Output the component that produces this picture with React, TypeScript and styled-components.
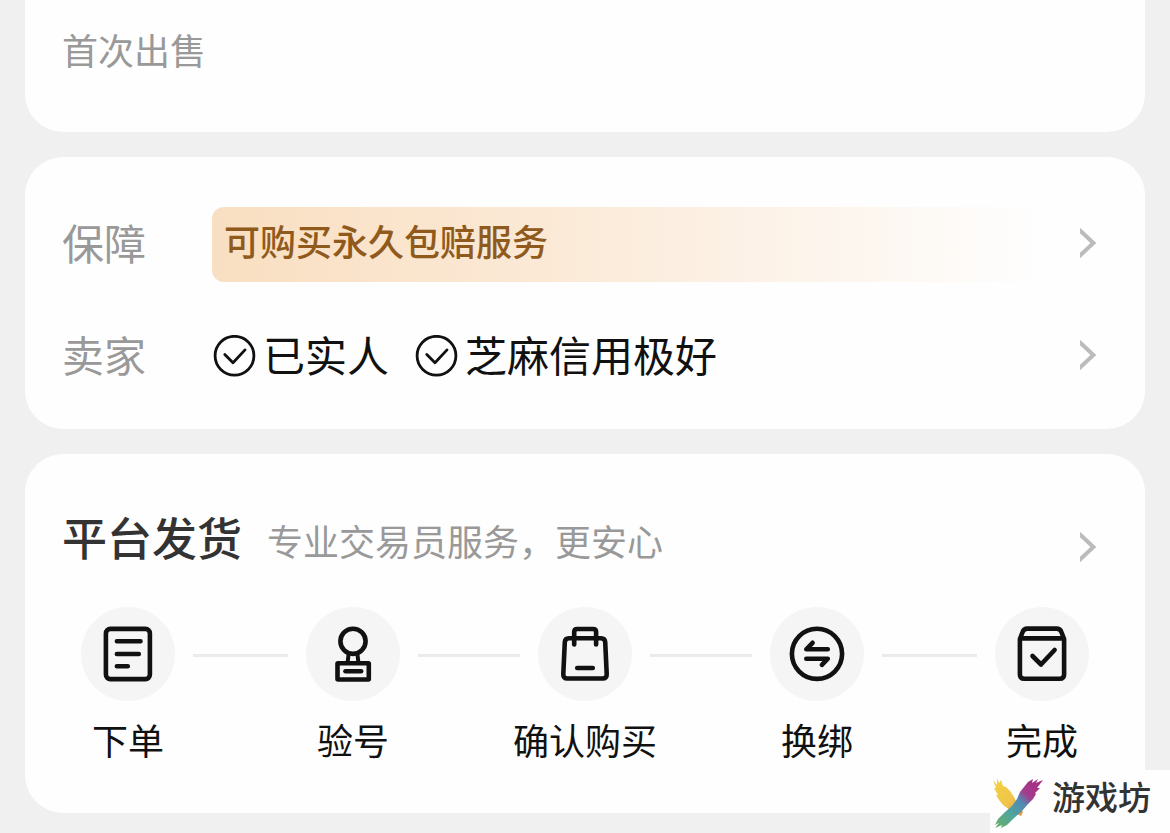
import React from 'react';
import styled, { createGlobalStyle } from 'styled-components';

const GlobalStyle = createGlobalStyle`
  *, *::before, *::after { box-sizing: border-box; }
  body {
    margin: 0;
    background: #f0f0f0;
    font-family: "Noto Sans CJK SC", sans-serif;
    color: #111;
  }
`;

const Page = styled.main`
  position: relative;
  display: flex;
  flex-direction: column;
  gap: 25px;
  padding: 0 25px 20px;
`;

const Card = styled.section<{ $pad: string; $open?: boolean }>`
  background: #fefefe;
  border-radius: ${(p) => (p.$open ? '0 0 38px 38px' : '38px')};
  padding: ${(p) => p.$pad};
`;

const Note = styled.p`
  margin: 0;
  font-size: 36px;
  line-height: 52px;
  color: #999;
`;

const Rows = styled.div`
  display: flex;
  flex-direction: column;
  gap: 37px;
`;

const Row = styled.button`
  display: flex;
  align-items: center;
  width: 100%;
  min-height: 75px;
  padding: 0;
  border: 0;
  background: none;
  color: inherit;
  font: inherit;
  text-align: left;
  cursor: pointer;
`;

const RowText = styled.span`
  padding-bottom: 6px;
  font-size: 42px;
  line-height: 60px;
  white-space: nowrap;
`;

const RowLabel = styled(RowText)`
  flex: 0 0 150px;
  color: #999;
`;

const Banner = styled.span`
  flex: 1;
  margin-right: 38px;
  padding: 7px 12px 16px;
  border-radius: 12px;
  background: linear-gradient(90deg, #f9dfc1 0%, #fbe9d6 40%, #fefefe 100%);
  font-size: 36px;
  line-height: 52px;
  font-weight: 500;
  color: #8f5a1c;
`;

const Badges = styled.span`
  flex: 1;
  display: flex;
  gap: 26px;
  padding-left: 1px;
`;

const Badge = styled.span`
  display: flex;
  align-items: center;
  gap: 7px;
`;

const Heading = styled(Row)`
  min-height: 72px;
  margin-bottom: 31px;
`;

const HeadingText = styled.span`
  flex: 1;
  display: flex;
  align-items: baseline;
  gap: 25px;
  padding-bottom: 6px;
`;

const Title = styled.span`
  font-size: 45px;
  line-height: 66px;
  font-weight: 500;
  color: #333;
`;

const Subtitle = styled.span`
  font-size: 36px;
  line-height: 52px;
  color: #999;
`;

const ChevronBox = styled.span<{ $low?: boolean }>`
  display: flex;
  padding: ${(p) => (p.$low ? '14px 0 0' : '0 0 3px')};
`;

const Steps = styled.ol`
  display: flex;
  list-style: none;
  margin: 0;
  padding: 0 8px 0 19px;
`;

const Step = styled.li`
  flex: 0 0 94px;
  min-width: 0;
  display: flex;
  flex-direction: column;
  align-items: center;
  gap: 12px;
`;

const StepIcon = styled.span`
  display: flex;
  width: 94px;
  height: 94px;
  border-radius: 50%;
  background: #f5f5f5;
`;

const StepLabel = styled.span`
  font-size: 36px;
  line-height: 52px;
  white-space: nowrap;
`;

const Connector = styled.li<{ $grow: number }>`
  flex: ${(p) => p.$grow} 1 0;
  height: 3px;
  margin: 47px 18px 0;
  background: #ebebeb;
`;

const Watermark = styled.div`
  position: absolute;
  right: 0;
  bottom: 0;
  display: flex;
  align-items: center;
  gap: 6px;
  width: 180px;
  height: 63px;
  background: #fefefe;
`;

const WatermarkText = styled.span`
  padding-bottom: 12px;
  font-size: 33px;
  line-height: 48px;
  font-weight: 500;
  color: #333;
  white-space: nowrap;
`;

const Chevron = ({ low }: { low?: boolean }) => (
  <ChevronBox $low={low}>
    <svg width="17" height="30" viewBox="0 0 17 30" fill="none" stroke="#bbb" strokeWidth="4" aria-hidden="true">
      <path d="M-1 1.5 L13.4 15 L-1 28.5" />
    </svg>
  </ChevronBox>
);

const Check = () => (
  <svg width="43" height="43" viewBox="0 0 43 43" fill="none" stroke="#111" strokeWidth="2.8" aria-hidden="true">
    <circle cx="21.5" cy="20.7" r="19.4" />
    <path d="M11.8 19.4 L20 27.8 L32 14.9" strokeLinecap="round" strokeLinejoin="round" />
  </svg>
);

const Glyph = ({ children }: { children: React.ReactNode }) => (
  <svg
    width="94"
    height="94"
    viewBox="0 0 94 94"
    fill="none"
    stroke="#111"
    strokeWidth="4.6"
    strokeLinecap="round"
    strokeLinejoin="round"
    aria-hidden="true"
  >
    {children}
  </svg>
);

const steps = [
  {
    label: '下单',
    icon: (
      <>
        <rect x="24.9" y="21.9" width="44" height="50.2" rx="4.5" />
        <path d="M35.9 34.3H59.5M35.9 47H57.8M35.9 59.3H46.8" />
      </>
    ),
  },
  {
    label: '验号',
    icon: (
      <>
        <circle cx="47" cy="34.3" r="12.6" />
        <path d="M42.6 47 L41.6 55.5 M51.4 47 L52.4 55.5" strokeWidth="4" />
        <rect x="31.5" y="56.2" width="31.3" height="16.3" rx="0.5" />
        <path d="M39.5 64.2H55.1" />
      </>
    ),
  },
  {
    label: '确认购买',
    icon: (
      <>
        <path d="M31 31.2H63Q67 31.2 67.2 35.2L68.7 67Q68.9 71.5 64.6 71.5H29.4Q25.1 71.5 25.3 67L26.8 35.2Q27 31.2 31 31.2Z" />
        <path d="M36.2 37.5V25Q36.2 22 39.2 22H55.1Q58.1 22 58.1 25V37.5" />
        <path d="M39.2 61H54.8" />
      </>
    ),
  },
  {
    label: '换绑',
    icon: (
      <>
        <circle cx="47" cy="46.8" r="25.1" />
        <path d="M57.8 42.3H36.3L42.6 35.8M36.3 51.7H57.8L51.9 57.8" />
      </>
    ),
  },
  {
    label: '完成',
    icon: (
      <>
        <path d="M24.9 32L27.6 25Q28.8 21.6 32.4 21.6H61.6Q65.2 21.6 66.4 25L69.1 32V67.5Q69.1 71.8 64.8 71.8H29.2Q24.9 71.8 24.9 67.5Z" />
        <path d="M26 31.4H68M37.5 49L46 57.5L59.6 43" />
      </>
    ),
  },
];

const Logo = () => (
  <svg width="56" height="56" viewBox="0 0 56 56" aria-hidden="true">
    <defs>
      <linearGradient id="gold" x1="0" y1="0" x2="0.8" y2="1">
        <stop offset="0" stopColor="#f3d33c" />
        <stop offset="0.65" stopColor="#f0c44c" />
        <stop offset="1" stopColor="#e0974a" />
      </linearGradient>
      <linearGradient id="plume" x1="1" y1="0" x2="0" y2="1">
        <stop offset="0" stopColor="#a52a80" />
        <stop offset="0.32" stopColor="#a43c8c" />
        <stop offset="0.46" stopColor="#5289b4" />
        <stop offset="0.7" stopColor="#4ea69c" />
        <stop offset="1" stopColor="#6fae68" />
      </linearGradient>
    </defs>
    <path
      fill="url(#gold)"
      d="M7 4L9 9L11 6L13 12L16 13L20 17L24 23L28 31L33 38L31 42L27 40L20 36L13 31L9 26L6 21L8 21L4 14L6 14L3 6L7 11Z"
    />
    <path
      fill="url(#plume)"
      d="M53 6L46 9L48 5L42 9L43 5L38 8L34 13L30 18L27 25L22 32L15 38L8 45L5 51L9 49L5 54L12 51L11 54L17 51L23 45L32 37L38 30L43 25L46 20L45 19L50 14L47 14Z"
    />
  </svg>
);

export default function App() {
  return (
    <>
      <GlobalStyle />
      <Page>
        <Card $pad="23px 37px 57px" $open>
          <Note>首次出售</Note>
        </Card>

        <Card $pad="50px 48px 35px 37px">
          <Rows>
            <Row type="button">
              <RowLabel>保障</RowLabel>
              <Banner>可购买永久包赔服务</Banner>
              <Chevron />
            </Row>
            <Row type="button">
              <RowLabel>卖家</RowLabel>
              <Badges>
                <Badge>
                  <Check />
                  <RowText>已实人</RowText>
                </Badge>
                <Badge>
                  <Check />
                  <RowText>芝麻信用极好</RowText>
                </Badge>
              </Badges>
              <Chevron />
            </Row>
          </Rows>
        </Card>

        <Card $pad="50px 48px 48px 37px">
          <Heading type="button">
            <HeadingText>
              <Title>平台发货</Title>
              <Subtitle>专业交易员服务，更安心</Subtitle>
            </HeadingText>
            <Chevron low />
          </Heading>
          <Steps>
            {steps.map((step, i) => (
              <React.Fragment key={step.label}>
                {i > 0 && <Connector aria-hidden="true" $grow={i === 1 || i === 4 ? 95 : 102} />}
                <Step>
                  <StepIcon>
                    <Glyph>{step.icon}</Glyph>
                  </StepIcon>
                  <StepLabel>{step.label}</StepLabel>
                </Step>
              </React.Fragment>
            ))}
          </Steps>
        </Card>

        <Watermark>
          <Logo />
          <WatermarkText>游戏坊</WatermarkText>
        </Watermark>
      </Page>
    </>
  );
}
